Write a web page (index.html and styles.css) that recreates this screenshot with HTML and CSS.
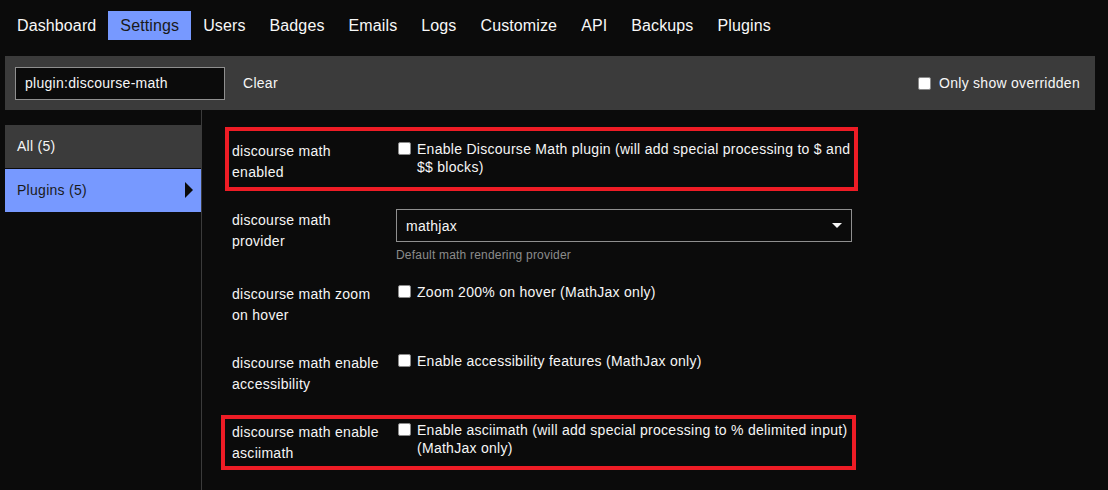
FILE: index.html
```html
<!DOCTYPE html>
<html>
<head>
<meta charset="utf-8">
<link rel="stylesheet" href="styles.css">
</head>
<body>
<nav class="admin-nav">
  <a class="nav-item">Dashboard</a>
  <a class="nav-item active">Settings</a>
  <a class="nav-item">Users</a>
  <a class="nav-item">Badges</a>
  <a class="nav-item">Emails</a>
  <a class="nav-item">Logs</a>
  <a class="nav-item">Customize</a>
  <a class="nav-item">API</a>
  <a class="nav-item">Backups</a>
  <a class="nav-item">Plugins</a>
</nav>

<div class="filter-bar">
  <div class="filter-input">plugin:discourse-math</div>
  <span class="clear-btn">Clear</span>
  <label class="overridden">
    <input type="checkbox" class="cb">
    <span>Only show overridden</span>
  </label>
</div>

<div class="main">
  <aside class="sidebar">
    <div class="side-item">All <span class="count">(5)</span></div>
    <div class="side-item active">Plugins <span class="count">(5)</span><span class="arrow"></span></div>
  </aside>

  <section class="settings">
    <div class="row mark-one">
      <div class="label">discourse math enabled</div>
      <div class="value">
        <label class="check">
          <input type="checkbox" class="cb">
          <span class="check-text">Enable Discourse Math plugin (will add special processing to $ and $$ blocks)</span>
        </label>
      </div>
    </div>

    <div class="row">
      <div class="label">discourse math provider</div>
      <div class="value">
        <div class="select">
          <span>mathjax</span>
          <span class="caret"></span>
        </div>
        <div class="desc">Default math rendering provider</div>
      </div>
    </div>

    <div class="row">
      <div class="label">discourse math zoom on hover</div>
      <div class="value">
        <label class="check">
          <input type="checkbox" class="cb">
          <span class="check-text">Zoom 200% on hover (MathJax only)</span>
        </label>
      </div>
    </div>

    <div class="row">
      <div class="label">discourse math enable accessibility</div>
      <div class="value">
        <label class="check">
          <input type="checkbox" class="cb">
          <span class="check-text">Enable accessibility features (MathJax only)</span>
        </label>
      </div>
    </div>

    <div class="row mark-two">
      <div class="label">discourse math enable asciimath</div>
      <div class="value">
        <label class="check">
          <input type="checkbox" class="cb">
          <span class="check-text">Enable asciimath (will add special processing to % delimited input) (MathJax only)</span>
        </label>
      </div>
    </div>
  </section>
</div>
</body>
</html>
```

FILE: styles.css
```css
*, *::before, *::after { box-sizing: border-box; }

html, body {
  margin: 0;
  padding: 0;
  background: #0b0b0b;
  color: #f6f6f6;
  font-family: "Liberation Sans", Arial, sans-serif;
  font-size: 14px;
  letter-spacing: 0.28px;
  height: 100%;
  overflow: hidden;
}

.admin-nav {
  display: flex;
  padding: 11px 0 0 5px;
}

.nav-item {
  display: block;
  padding: 0 12px;
  height: 29px;
  line-height: 29px;
  font-size: 16px;
  letter-spacing: 0.12px;
  color: #f8f8f8;
}

.nav-item.active {
  background: #7799ff;
  color: #1a1a1a;
}

.filter-bar {
  display: flex;
  align-items: center;
  margin: 16px 13px 0 5px;
  height: 54px;
  padding: 0 15px 0 10px;
  background: #3b3b3b;
}

.filter-input {
  width: 210px;
  height: 33px;
  line-height: 31px;
  padding-left: 9px;
  border: 1px solid #8f8f8f;
  background: #0b0b0b;
  color: #f6f6f6;
}

.clear-btn {
  margin-left: 18px;
}

.overridden {
  margin-left: auto;
  display: flex;
  align-items: center;
}

.cb {
  appearance: none;
  -webkit-appearance: none;
  width: 13px;
  height: 13px;
  margin: 0;
  background: #ffffff;
  border: 1px solid #8a8a8a;
  border-radius: 2px;
  flex: none;
}

.overridden .cb {
  margin-right: 8px;
}

.main {
  display: flex;
  margin-left: 5px;
  height: calc(100% - 110px);
}

.sidebar {
  width: 197px;
  padding-top: 15px;
  border-right: 1px solid #3b3b3b;
  flex: none;
}

.side-item {
  position: relative;
  height: 43px;
  line-height: 43px;
  padding-left: 12px;
  margin-bottom: 1px;
  background: #3b3b3b;
}

.side-item.active {
  background: #7799ff;
  color: #1a1a1a;
}

.arrow {
  position: absolute;
  right: 8px;
  top: 13px;
  width: 0;
  height: 0;
  border-top: 8px solid transparent;
  border-bottom: 8px solid transparent;
  border-left: 8px solid #0b0b0b;
}

.settings {
  flex: 1;
  padding: 31px 0 0 30px;
}

.row {
  position: relative;
  display: flex;
  align-items: flex-start;
  min-height: 48px;
  margin-bottom: 21px;
}

.label {
  width: 150px;
  margin-right: 14px;
  line-height: 21px;
  flex: none;
}

.value {
  width: 456px;
}

.check {
  display: flex;
  align-items: flex-start;
}

.check .cb {
  margin: 1px 6px 0 2px;
}

.check-text {
  display: block;
  max-width: 436px;
  line-height: 18px;
  margin-top: -1px;
}

.select {
  display: flex;
  align-items: center;
  justify-content: space-between;
  height: 33px;
  margin-top: -1px;
  padding: 0 9px;
  border: 1px solid #8f8f8f;
  background: #0b0b0b;
}

.caret {
  width: 0;
  height: 0;
  border-left: 5px solid transparent;
  border-right: 5px solid transparent;
  border-top: 5px solid #f6f6f6;
}

.desc {
  margin-top: 5px;
  font-size: 12px;
  letter-spacing: 0.2px;
  line-height: 16px;
  color: #8c8c8c;
}

.mark-one::after,
.mark-two::after {
  content: "";
  position: absolute;
  border: 4px solid #ee1c25;
  pointer-events: none;
}

.mark-one::after {
  left: -7px;
  top: -14px;
  width: 633px;
  height: 64px;
}

.mark-two::after {
  left: -11px;
  top: -7px;
  width: 635px;
  height: 55px;
}
```
